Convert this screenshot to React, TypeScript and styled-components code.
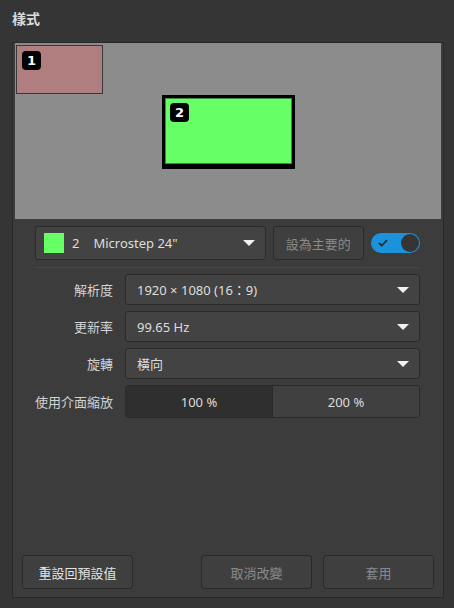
import styled, { createGlobalStyle } from 'styled-components'

const GlobalStyle = createGlobalStyle`
  body {
    margin: 0;
    background: #353535;
    font-family: "Noto Sans", "Noto Sans CJK TC", sans-serif;
    font-size: 13px;
    color: #dcdcdc;
  }
`

const Page = styled.div`
  width: 454px;
  height: 608px;
  display: flex;
  flex-direction: column;
  box-sizing: border-box;
  padding: 0 10px 10px 12px;
`

const Title = styled.h3`
  margin: 0;
  height: 42px;
  line-height: 38px;
  font-size: 14px;
  font-weight: 700;
  color: #dcdcdc;
`

const Frame = styled.section`
  flex: 1;
  display: flex;
  flex-direction: column;
  background: #3c3c3c;
  border: 1px solid #282828;
  padding: 0 2px 8px 2px;
`

const Preview = styled.div`
  position: relative;
  height: 176px;
  background: #8c8c8c;
`

const Monitor = styled.div<{ $color: string; $primary?: boolean }>`
  position: absolute;
  box-sizing: border-box;
  background: ${(p) => p.$color};
  border: ${(p) => (p.$primary ? '3px solid #000' : '1px solid #383838')};
  border-bottom-width: ${(p) => (p.$primary ? '5px' : '1px')};
  box-shadow: ${(p) => (p.$primary ? 'inset 0 0 0 1px #3c8a3c' : 'none')};
  padding: ${(p) => (p.$primary ? '5px' : '5px')};
`

const Badge = styled.span`
  display: flex;
  align-items: center;
  justify-content: center;
  width: 19px;
  height: 19px;
  border-radius: 4px;
  background: #000;
  color: #fff;
  font-family: "DejaVu Sans", sans-serif;
  font-weight: 700;
  font-size: 13px;
`

const Content = styled.div`
  display: flex;
  flex-direction: column;
  padding: 7px 21px 0 20px;
  flex: 1;
`

const TopRow = styled.div`
  display: flex;
  align-items: center;
  gap: 7px;
  height: 34px;
  padding-bottom: 7px;
  border-bottom: 1px solid #464646;
  margin-bottom: 6px;
`

const Combo = styled.div<{ $width?: number }>`
  display: flex;
  align-items: center;
  box-sizing: border-box;
  height: 100%;
  width: ${(p) => (p.$width ? `${p.$width}px` : 'auto')};
  flex: ${(p) => (p.$width ? 'none' : '1')};
  background: #434343;
  border: 1px solid #2a2a2a;
  border-radius: 3px;
  padding: 0 10px 0 11px;
  color: #dedede;
  gap: 6px;
`

const Swatch = styled.span`
  width: 20px;
  height: 20px;
  background: #66ff66;
  margin-left: -3px;
  margin-right: 2px;
`

const Grow = styled.span`
  flex: 1;
`

const Arrow = styled.span`
  width: 0;
  height: 0;
  border-left: 6px solid transparent;
  border-right: 6px solid transparent;
  border-top: 6px solid #f2f2f2;
`

const Button = styled.button<{ $disabled?: boolean }>`
  box-sizing: border-box;
  height: 34px;
  width: 111px;
  background: #3f3f3f;
  border: 1px solid #2a2a2a;
  border-radius: 3px;
  font-family: inherit;
  font-size: 13px;
  color: ${(p) => (p.$disabled ? '#8a8a8a' : '#e2e2e2')};
  padding: 0;
`

const Toggle = styled.span`
  position: relative;
  display: flex;
  align-items: center;
  width: 50px;
  height: 20px;
  border-radius: 10px;
  background: #1b93db;
  padding-left: 7px;
  box-sizing: border-box;
`

const Knob = styled.span`
  position: absolute;
  right: 1px;
  top: 1px;
  width: 18px;
  height: 18px;
  border-radius: 50%;
  background: #353535;
`

const Form = styled.div`
  display: grid;
  grid-template-columns: 78px 1fr;
  column-gap: 12px;
  row-gap: 6px;
  align-items: center;
  padding-left: 0;
`

const Label = styled.span`
  text-align: right;
  color: #d2d2d2;
  white-space: nowrap;
`

const Field = styled.div`
  height: 31px;
`

const Segmented = styled.div`
  display: flex;
  height: 33px;
  box-sizing: border-box;
  border: 1px solid #2a2a2a;
  border-radius: 3px;
  overflow: hidden;
`

const Segment = styled.div<{ $active?: boolean }>`
  flex: 1;
  display: flex;
  align-items: center;
  justify-content: center;
  background: ${(p) => (p.$active ? '#2f2f2f' : '#404040')};
  border-right: ${(p) => (p.$active ? '1px solid #2a2a2a' : 'none')};
  color: #dcdcdc;
`

const Footer = styled.div`
  display: flex;
  gap: 11px;
  padding: 0 7px;
  margin-top: auto;
`

const Spacer = styled.div`
  flex: 1;
`

export default function App() {
  return (
    <Page>
      <GlobalStyle />
      <Title>樣式</Title>
      <Frame>
        <Preview>
          <Monitor $color="#b07e7e" style={{ left: 1, top: 2, width: 87, height: 49 }}>
            <Badge>1</Badge>
          </Monitor>
          <Monitor $color="#66ff66" $primary style={{ left: 147, top: 52, width: 133, height: 74 }}>
            <Badge>2</Badge>
          </Monitor>
        </Preview>
        <Content>
          <TopRow>
            <Combo $width={231}>
              <Swatch />
              <span>2</span>
              <span style={{ marginLeft: 8 }}>Microstep 24"</span>
              <Grow />
              <Arrow />
            </Combo>
            <Button $disabled style={{ width: 92 }}>設為主要的</Button>
            <Toggle>
              <svg width="10" height="8" viewBox="0 0 10 8">
                <path d="M1 4 L3.8 6.6 L9 1.2" fill="none" stroke="#2a2a2a" strokeWidth="1.8" />
              </svg>
              <Knob />
            </Toggle>
          </TopRow>
          <Form>
            <Label>解析度</Label>
            <Field>
              <Combo>
                <span>1920 × 1080 (16：9)</span>
                <Grow />
                <Arrow />
              </Combo>
            </Field>
            <Label>更新率</Label>
            <Field>
              <Combo>
                <span>99.65 Hz</span>
                <Grow />
                <Arrow />
              </Combo>
            </Field>
            <Label>旋轉</Label>
            <Field>
              <Combo>
                <span>橫向</span>
                <Grow />
                <Arrow />
              </Combo>
            </Field>
            <Label>使用介面縮放</Label>
            <Segmented>
              <Segment $active>100 %</Segment>
              <Segment>200 %</Segment>
            </Segmented>
          </Form>
        </Content>
        <Footer>
          <Button>重設回預設值</Button>
          <Spacer />
          <Button $disabled>取消改變</Button>
          <Button $disabled>套用</Button>
        </Footer>
      </Frame>
    </Page>
  )
}
